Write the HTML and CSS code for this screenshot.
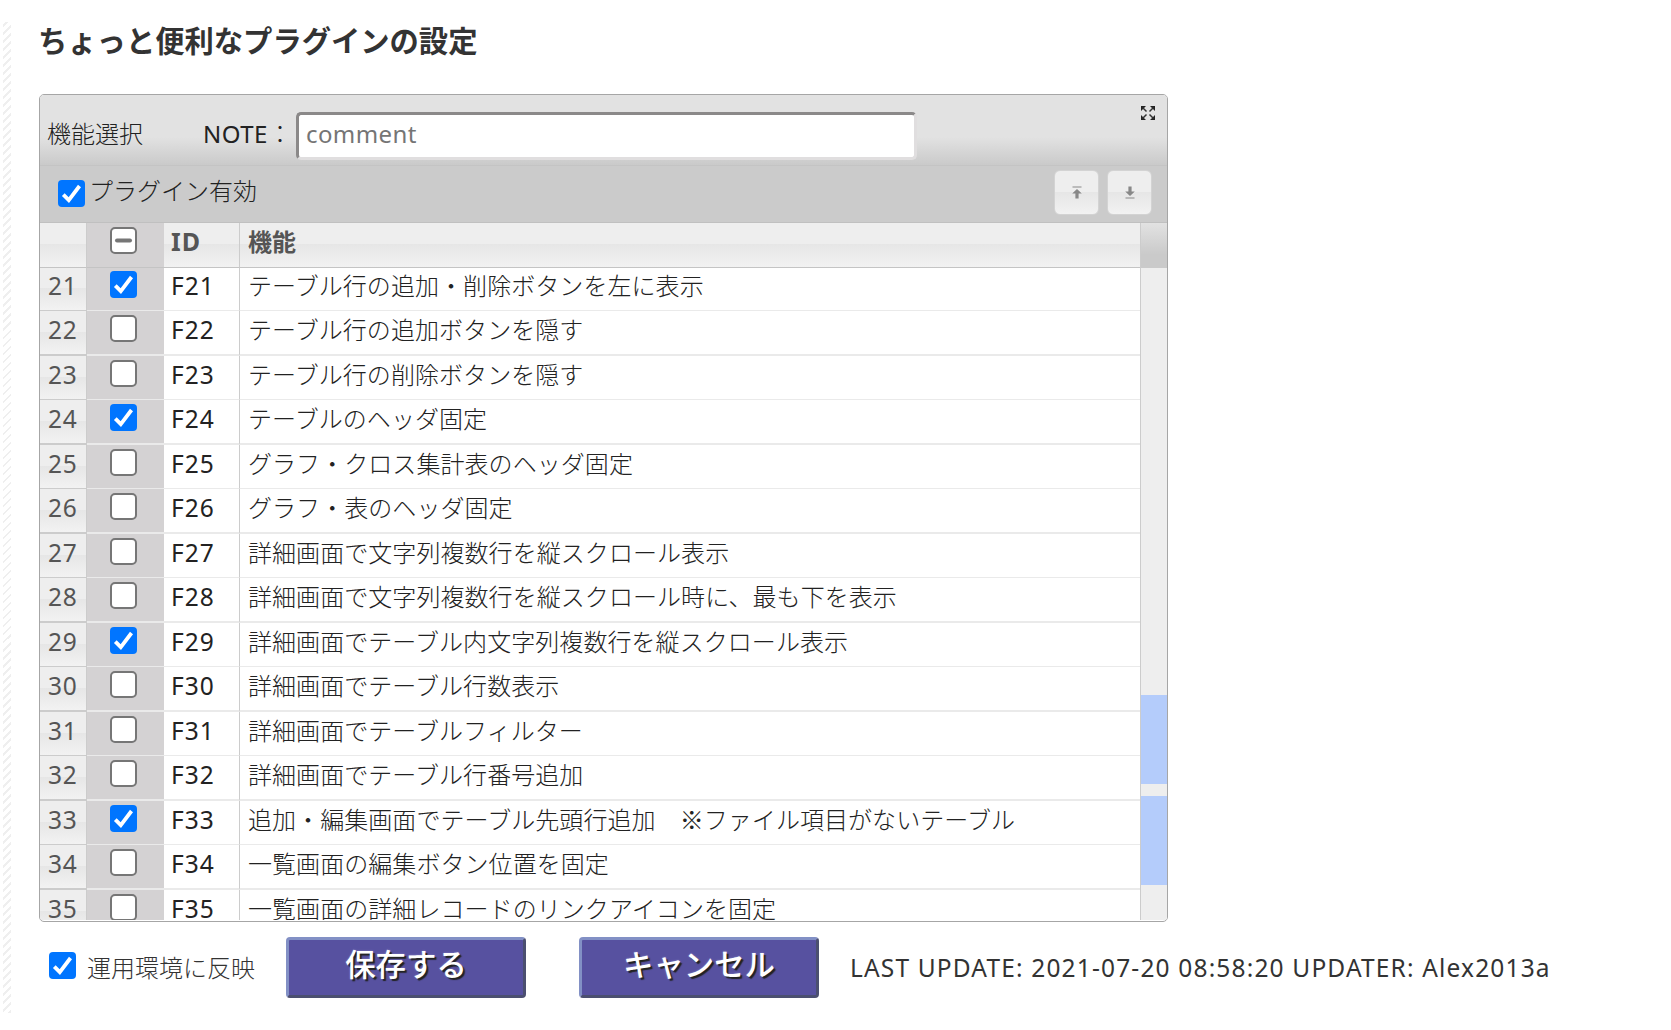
FILE: index.html
```
<!DOCTYPE html>
<html lang="ja">
<head>
<meta charset="utf-8">
<title>ちょっと便利なプラグインの設定</title>
<link rel="stylesheet" href="styles.css">
</head>
<body>
<svg class="defs" width="0" height="0" aria-hidden="true">
  <symbol id="on" viewBox="0 0 27 27"><rect width="27" height="27" rx="4" fill="#0075ff"/><path d="M5.3 14.6l5.5 5.5L21.5 6" fill="none" stroke="#fff" stroke-width="3.8"/></symbol>
  <symbol id="off" viewBox="0 0 27 27"><rect x="1" y="1" width="25" height="25" rx="4" fill="#fff" stroke="#767676" stroke-width="2"/></symbol>
  <symbol id="mixed" viewBox="0 0 27 27"><rect x="1" y="1" width="25" height="25" rx="4" fill="#fff" stroke="#767676" stroke-width="2"/><rect x="5" y="11.5" width="17" height="4" rx="2" fill="#767676"/></symbol>
</svg>
<div class="page">
  <div class="stripe"></div>
  <main class="content">
    <h1 class="title">ちょっと便利なプラグインの設定</h1>
    <section class="panel">
      <header class="panel-head">
        <span class="head-label">機能選択</span>
        <label class="note-label">NOTE<span class="colon">：</span></label>
        <input class="note" type="text" placeholder="comment">
        <svg class="expand" viewBox="0 0 14 14"><path fill="#222" d="M0 0h5L0 5zM14 0v5L9 0zM0 14V9l5 5zM14 14H9l5-5z"/><path stroke="#333" stroke-width="1.500" d="M1.500 1.500l4 4M12.500 1.500l-4 4M1.500 12.500l4-4M12.500 12.500l-4-4"/></svg>
      </header>
      <div class="toolbar">
        <svg class="box"><use href="#on"/></svg>
        <span class="enable">プラグイン有効</span>
        <button class="tool"><svg viewBox="0 0 10 13"><path fill="#888" d="M.5 .5h9v1h-9zM5 3l4.800 4.500H6.600V12.500H3.400V7.500H.2z"/></svg></button>
        <button class="tool"><svg viewBox="0 0 10 13"><path fill="#888" d="M.5 11.500h9v1h-9zM5 10L.2 5.500h3.200V.5h3.200v5h3.200z"/></svg></button>
      </div>
      <div class="grid">
        <div class="table">
          <div class="row columns"><div class="num"></div><div class="chk"><svg class="box"><use href="#mixed"/></svg></div><div class="fid">ID</div><div class="fn">機能</div></div>
          <div class="rows">
            <div class="row"><div class="num">21</div><div class="chk"><svg class="box"><use href="#on"/></svg></div><div class="fid">F21</div><div class="fn">テーブル行の追加・削除ボタンを左に表示</div></div>
            <div class="row"><div class="num">22</div><div class="chk"><svg class="box"><use href="#off"/></svg></div><div class="fid">F22</div><div class="fn">テーブル行の追加ボタンを隠す</div></div>
            <div class="row"><div class="num">23</div><div class="chk"><svg class="box"><use href="#off"/></svg></div><div class="fid">F23</div><div class="fn">テーブル行の削除ボタンを隠す</div></div>
            <div class="row"><div class="num">24</div><div class="chk"><svg class="box"><use href="#on"/></svg></div><div class="fid">F24</div><div class="fn">テーブルのヘッダ固定</div></div>
            <div class="row"><div class="num">25</div><div class="chk"><svg class="box"><use href="#off"/></svg></div><div class="fid">F25</div><div class="fn">グラフ・クロス集計表のヘッダ固定</div></div>
            <div class="row"><div class="num">26</div><div class="chk"><svg class="box"><use href="#off"/></svg></div><div class="fid">F26</div><div class="fn">グラフ・表のヘッダ固定</div></div>
            <div class="row"><div class="num">27</div><div class="chk"><svg class="box"><use href="#off"/></svg></div><div class="fid">F27</div><div class="fn">詳細画面で文字列複数行を縦スクロール表示</div></div>
            <div class="row"><div class="num">28</div><div class="chk"><svg class="box"><use href="#off"/></svg></div><div class="fid">F28</div><div class="fn">詳細画面で文字列複数行を縦スクロール時に、最も下を表示</div></div>
            <div class="row"><div class="num">29</div><div class="chk"><svg class="box"><use href="#on"/></svg></div><div class="fid">F29</div><div class="fn">詳細画面でテーブル内文字列複数行を縦スクロール表示</div></div>
            <div class="row"><div class="num">30</div><div class="chk"><svg class="box"><use href="#off"/></svg></div><div class="fid">F30</div><div class="fn">詳細画面でテーブル行数表示</div></div>
            <div class="row"><div class="num">31</div><div class="chk"><svg class="box"><use href="#off"/></svg></div><div class="fid">F31</div><div class="fn">詳細画面でテーブルフィルター</div></div>
            <div class="row"><div class="num">32</div><div class="chk"><svg class="box"><use href="#off"/></svg></div><div class="fid">F32</div><div class="fn">詳細画面でテーブル行番号追加</div></div>
            <div class="row"><div class="num">33</div><div class="chk"><svg class="box"><use href="#on"/></svg></div><div class="fid">F33</div><div class="fn">追加・編集画面でテーブル先頭行追加　※ファイル項目がないテーブル</div></div>
            <div class="row"><div class="num">34</div><div class="chk"><svg class="box"><use href="#off"/></svg></div><div class="fid">F34</div><div class="fn">一覧画面の編集ボタン位置を固定</div></div>
            <div class="row"><div class="num">35</div><div class="chk"><svg class="box"><use href="#off"/></svg></div><div class="fid">F35</div><div class="fn">一覧画面の詳細レコードのリンクアイコンを固定</div></div>
          </div>
        </div>
        <div class="scroll"><div class="scroll-head"></div><div class="mark"></div><div class="mark"></div></div>
      </div>
    </section>
    <footer class="actions">
      <svg class="box"><use href="#on"/></svg>
      <span class="apply">運用環境に反映</span>
      <button class="btn">保存する</button>
      <button class="btn">キャンセル</button>
      <span class="updated">LAST UPDATE: 2021-07-20 08:58:20 UPDATER: Alex2013a</span>
    </footer>
  </main>
</div>
</body>
</html>
```
FILE: styles.css
```
* { box-sizing: border-box; }
body {
  margin: 0;
  background: #fff;
  color: #222;
  font: 300 24px/36px "Noto Sans", "Noto Sans CJK JP", sans-serif;
  white-space: nowrap;
  overflow: hidden;
}
input, button { font: inherit; margin: 0; padding: 0; }
.defs { position: absolute; }
.page { display: flex; height: 1030px; }
.stripe {
  width: 8px;
  margin: 22px 28px 17px 3px;
  background: repeating-linear-gradient(135deg, #fff 0 2px, #efefef 2px 4px, #fff 4px 5.660px);
}
.content { width: 1600px; }
.title {
  margin: 0 0 0 -1px;
  height: 94px;
  padding-top: 19px;
  color: #333;
  font-size: 29.300px;
  font-weight: 700;
  line-height: 44px;
}
.panel {
  width: 1129px;
  height: 828px;
  border: 1px solid #a6a6a6;
  border-radius: 5px;
  overflow: hidden;
}
.panel-head {
  display: flex;
  align-items: flex-start;
  height: 71px;
  padding-left: 7px;
  border-bottom: 1px solid #c4c4c4;
  background: linear-gradient(#e2e2e2, #e2e2e2 60%, #cacaca);
}
.head-label { width: 156px; margin-top: 21px; }
.note-label { width: 93px; margin-top: 20px; font-weight: 400; letter-spacing: .5px; }
.colon { font-family: "Noto Sans CJK JP", sans-serif; font-weight: 300; }
.note {
  width: 621px;
  height: 48px;
  margin-top: 17px;
  padding: 0 0 5px 7px;
  border: 3px solid;
  border-color: #8b8989 #e0dedf #e0dedf #8b8989;
  border-radius: 5px;
  background: #fff;
  font-weight: 400;
  letter-spacing: .4px;
}
.note::placeholder { color: #757575; opacity: 1; }
.expand { width: 14px; height: 14px; margin: 11px 0 0 224px; }
.box { display: block; flex: none; width: 27px; height: 27px; }
.toolbar {
  display: flex;
  align-items: flex-start;
  height: 57px;
  padding: 4px 15px 0 18px;
  border-bottom: 1px solid #c0c0c0;
  background: #cbcbcb;
}
.toolbar .box { margin-top: 10px; }
.enable { margin: 3px auto 0 4px; }
.tool {
  display: flex;
  align-items: center;
  justify-content: center;
  width: 45px;
  height: 45px;
  margin-left: 8px;
  border: 1px solid #d3d3d3;
  border-radius: 6px;
  background: linear-gradient(#eee 50%, #e6e6e6 50%, #f2f2f2);
}
.tool svg { width: 10px; height: 13px; }
.grid { display: flex; height: 697px; }
.table { width: 1101px; border-right: 1px solid #ccc; }
.rows { height: 652px; overflow: hidden; }
.row { display: grid; grid-template-columns: 47px 77px 76px 1fr; height: 44px; }
.row > div { border-bottom: 1px solid #eaeaea; line-height: 37px; }
.rows .row:nth-child(even) { height: 45px; }
.rows .row:nth-child(even) > div { border-bottom-width: 2px; }
.rows .row:first-child { margin-top: -1px; }
.row > .num {
  padding-left: 8px;
  border-right: 1px solid #ccc;
  border-bottom-color: #ccc;
  background: linear-gradient(#eee 48%, #e6e6e6 48%, #f2f2f2);
  color: #555;
  font-size: 24.500px;
  font-weight: 400;
  letter-spacing: .8px;
}
.row > .chk { padding: 4px 0 0 23px; background: #d4d2d3; }
.row > .fid { padding-left: 7px; border-right: 1px solid #ccc; font-size: 24.500px; font-weight: 400; letter-spacing: 1px; }
.row > .fn { padding-left: 8px; font-family: "Noto Sans CJK JP", sans-serif; line-height: 35px; letter-spacing: .06px; }
.row.columns { height: 45px; }
.row.columns > div {
  border-bottom-color: #c4c4c4;
  color: #555;
  font-weight: 700;
}
.row.columns > .fid { font-size: 25px; }
.columns > .fid, .columns > .fn { background: linear-gradient(#eee 48%, #e6e6e6 48%, #f2f2f2); }
.scroll { width: 26px; height: 697px; background: #eee; }
.scroll-head { height: 45px; margin-bottom: 427px; background: linear-gradient(#e2e2e2, #cacaca 70%); }
.mark { height: 89px; margin-bottom: 12px; background: #b4ccfb; }
.actions { display: flex; align-items: flex-start; padding-top: 15px; color: #333; }
.actions .box { margin: 15px 11px 0 10px; }
.apply { width: 199px; margin-top: 13px; }
.btn {
  width: 240px;
  height: 61px;
  margin-right: 53px;
  padding-bottom: 6px;
  border: 3px solid;
  border-color: #8290c5 #4b4f70 #4b4f70 #8290c5;
  border-radius: 4px;
  background: #5751a0;
  color: #fff;
  font-size: 30.400px;
  font-weight: 500;
  text-shadow: 2px 2px 1px #222, 0 0 2px #8d88c8;
}
.updated { margin: 13px 0 0 -22px; font-size: 24.500px; font-weight: 400; letter-spacing: 1.160px; }
```
